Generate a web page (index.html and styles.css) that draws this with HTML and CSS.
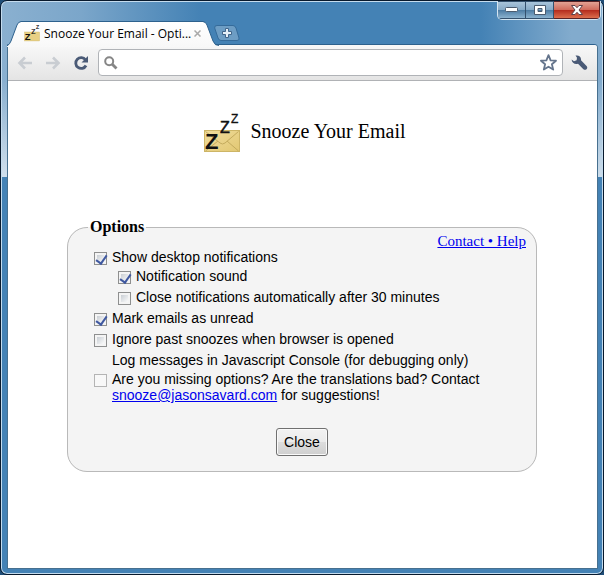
FILE: index.html
```html
<!DOCTYPE html>
<html lang="en">
<head>
  <meta charset="UTF-8">
  <title>Snooze Your Email - Options</title>
  <link rel="stylesheet" href="styles.css">
</head>
<body>

  <div class="window">
    <div class="titlebar">
      <div class="tab">
        <svg class="tab-shape" width="212" height="26" viewBox="0 0 212 26">
          <defs>
            <linearGradient id="tabfill" x1="0" y1="0" x2="0" y2="1">
              <stop offset="0" stop-color="#fff"/>
              <stop offset="1" stop-color="#f8f8f8"/>
            </linearGradient>
          </defs>
          <path d="M0 26V25Q3 23 4 20L10 4Q11 1 14 1H196Q199 1 200 4L206 20Q208 25 212 25V26Z" fill="url(#tabfill)"/>
          <path d="M0 25Q3 23 4 20L10 4Q11 1 14 .5H196Q199 1 200 4L206 20Q208 25 212 24.500" fill="none" stroke="#2d618d"/>
        </svg>
        <svg class="tab-icon snooze" width="17" height="17" viewBox="0 0 38 40">
          <rect x=".5" y="16.500" width="35" height="21" fill="#e8d084" stroke="#cdb566"/>
          <text class="z-big" x="1" y="35">Z</text>
          <text class="z-mid" x="16" y="20">Z</text>
          <text class="z-small" x="27" y="10">Z</text>
        </svg>
        <span class="tab-title">Snooze Your Email - Opti...</span>
        <button class="tab-close" aria-label="Close tab">
          <svg width="7" height="7" viewBox="0 0 7 7"><path d="M.5 .5L6.500 6.500M6.500 .5L.5 6.500" stroke="#a9a9a9" stroke-width="1.500"/></svg>
        </button>
      </div>
      <button class="new-tab" aria-label="New tab">
        <svg width="26" height="16" viewBox="0 0 26 16">
          <path d="M3 .5H19Q21 .5 22 3L25 13Q25.500 15.500 23 15.500H7Q5 15.500 4 13L.7 3Q.2 .5 3 .5Z" fill="#6d9dc4" stroke="#356b9a"/>
          <path d="M11.500 3.500H14.500V6.500H17.500V9.500H14.500V12.500H11.500V9.500H8.500V6.500H11.500Z" fill="#e6f0f8" stroke="#41658a"/>
        </svg>
      </button>
      <div class="controls">
        <button class="control minimize" aria-label="Minimize">
          <svg width="13" height="6" viewBox="0 0 13 6"><rect x=".5" y=".5" width="12" height="4" rx="1" fill="#fff" stroke="#4b5b6e"/></svg>
        </button>
        <button class="control maximize" aria-label="Maximize">
          <svg width="12" height="10" viewBox="0 0 12 10"><path d="M.5 .5H11.500V9.500H.5ZM4 3.500V6.500H8V3.500Z" fill="#fff" fill-rule="evenodd" stroke="#4b5b6e"/></svg>
        </button>
        <button class="control close" aria-label="Close window">
          <svg width="12" height="10" viewBox="0 0 12 10"><path d="M.5 .5H4L6 2.700L8 .5H11.500L8 5L11.500 9.500H8L6 7.300L4 9.500H.5L4 5Z" fill="#fff" stroke="#5c4149"/></svg>
        </button>
      </div>
    </div>

    <div class="browser">
      <div class="toolbar">
        <button class="tool" aria-label="Back" disabled>
          <svg width="16" height="14" viewBox="0 0 16 14"><path d="M15 7H3M8 1.500L2.500 7L8 12.500" fill="none" stroke="#c9cdd2" stroke-width="2.600"/></svg>
        </button>
        <button class="tool" aria-label="Forward" disabled>
          <svg width="16" height="14" viewBox="0 0 16 14"><path d="M1 7H13M8 1.500L13.500 7L8 12.500" fill="none" stroke="#c9cdd2" stroke-width="2.600"/></svg>
        </button>
        <button class="tool" aria-label="Reload">
          <svg width="16" height="16" viewBox="0 0 16 16">
            <path d="M12.500 4.800A5.400 5.400 0 1 0 13 10.500" fill="none" stroke="#4a5a76" stroke-width="2.800"/>
            <path d="M15 1V7.500H8.500Z" fill="#4a5a76"/>
          </svg>
        </button>
        <div class="omnibox">
          <svg width="14" height="14" viewBox="0 0 14 14">
            <circle cx="5.200" cy="5.200" r="4" fill="none" stroke="#868686" stroke-width="2"/>
            <path d="M8 8L12.500 12.500" stroke="#868686" stroke-width="2.800"/>
          </svg>
          <input type="text" class="address" aria-label="Address">
          <svg width="17" height="17" viewBox="0 0 17 17">
            <path d="M8.500 1.200L10.600 6.300L16 6.700L11.900 10.200L13.200 15.600L8.500 12.700L3.800 15.600L5.100 10.200L1 6.700L6.400 6.300Z" fill="#fff" stroke="#64748c" stroke-width="1.800" stroke-linejoin="round"/>
          </svg>
        </div>
        <button class="tool wrench" aria-label="Settings">
          <svg width="17" height="16" viewBox="0 0 17 16">
            <path d="M4.500 .6C7.500 -.2 10.500 1.600 10 5.300L15.800 11.200Q16.800 13 15.500 14.300Q14 15.400 12.400 14.200L7 8.800C4 9.800 .8 8 .6 4.500L3 6.200L5.600 5.300L6 2.700Z" fill="#4a5a76"/>
          </svg>
        </button>
      </div>

      <div class="page">
        <div class="header">
          <svg class="snooze" width="38" height="40" viewBox="0 0 38 40">
            <defs>
              <linearGradient id="paper" x1="0" y1="0" x2="1" y2="1">
                <stop offset="0" stop-color="#f0dc9c"/>
                <stop offset="1" stop-color="#e2c873"/>
              </linearGradient>
            </defs>
            <rect x=".5" y="17.500" width="35" height="21" fill="url(#paper)" stroke="#cdb566"/>
            <path d="M1.500 38L14 28M34.500 38L23 28M1.500 18.500L16 30Q18.500 32 21 30L34.500 18.500" fill="none" stroke="#c4ab5d"/>
            <text class="z-big" x="1" y="36">Z</text>
            <text class="z-mid" x="16" y="20">Z</text>
            <text class="z-small" x="27" y="10">Z</text>
          </svg>
          <span>Snooze Your Email</span>
        </div>

        <fieldset class="options">
          <legend>Options</legend>
          <a href="#" class="links">Contact • Help</a>

          <div class="row">
            <input type="checkbox" id="notify" checked>
            <label for="notify">Show desktop notifications</label>
          </div>
          <div class="row tight nested">
            <input type="checkbox" id="sound" checked>
            <label for="sound">Notification sound</label>
          </div>
          <div class="row nested">
            <input type="checkbox" id="autoclose">
            <label for="autoclose">Close notifications automatically after 30 minutes</label>
          </div>
          <div class="row">
            <input type="checkbox" id="unread" checked>
            <label for="unread">Mark emails as unread</label>
          </div>
          <div class="row">
            <input type="checkbox" id="ignore">
            <label for="ignore">Ignore past snoozes when browser is opened</label>
          </div>
          <div class="row unboxed">
            <label for="log">Log messages in Javascript Console (for debugging only)</label>
          </div>
          <div class="row tight">
            <input type="checkbox" id="log" disabled>
            <span>Are you missing options? Are the translations bad? Contact <a href="mailto:snooze@jasonsavard.com">snooze@jasonsavard.com</a> for suggestions!</span>
          </div>

          <div class="actions">
            <button class="close-button">Close</button>
          </div>
        </fieldset>
      </div>
    </div>
  </div>

</body>
</html>
```
FILE: styles.css
```css
* { box-sizing: border-box; }
body { margin: 0; background: #1f4e78; font-family: "Liberation Serif", serif; }
button { padding: 0; border: none; background: none; }
svg { display: block; flex: none; }
a { color: #0000ee; }

/* window frame */
.window {
  display: flex;
  flex-direction: column;
  min-height: 100vh;
  padding: 0 5px 5px 6px;
  border: 1px solid #08192c;
  border-radius: 7px;
  box-shadow: inset 0 0 0 1px #c5dcee;
  background:
    linear-gradient(to bottom, transparent 80px, rgba(255, 255, 255, 0.6) 176px, transparent 176px),
    linear-gradient(to right, #8ab0d0 0, #7ba6ca 80px, #4482b5 200px, #4482b5 480px, #82abcd 570px) no-repeat 0 0 / 100% 176px,
    #4482b5;
}

.titlebar { display: flex; height: 43px; align-items: flex-end; }
.tab { position: relative; display: flex; align-items: center; flex: none; width: 212px; height: 25px; padding-left: 17px; margin-bottom: -2px; z-index: 1; }
.tab-shape { position: absolute; left: 0; top: 0; }
.tab-icon, .tab-title, .tab-close { position: relative; }
.tab-title { margin-left: 3px; width: 150px; font: 12px/16px "Open Sans", sans-serif; white-space: nowrap; }
.new-tab { margin: 0 0 3px -5px; }

/* snooze icon */
.snooze { overflow: visible; font-family: "Liberation Sans", Arial, sans-serif; fill: #111; }
.z-big { font-size: 22px; font-weight: bold; }
.z-mid { font-size: 16px; stroke: #111; stroke-width: 0.5; }
.z-small { font-size: 12px; stroke: #111; stroke-width: 0.3; }

.controls { display: flex; align-self: flex-start; margin-left: auto; margin-right: -3px; border: 1px solid #d5e5f1; border-top: none; border-radius: 0 0 5px 5px; overflow: hidden; }
.control { display: flex; align-items: center; justify-content: center; width: 28px; height: 18px; border: 1px solid #34506d; border-left: none; background: linear-gradient(#a9c4da 0, #86a9c6 50%, #4c7ba3 51%, #8bb2cf 100%); }
.close { width: 46px; border-color: #5a2225; background: linear-gradient(#e2a294 0, #d0695a 50%, #b42b1d 51%, #dc6e4d 100%); }

.browser { display: flex; flex-direction: column; flex: 1; border: 1px solid #47708f; border-top-color: #2d618d; border-radius: 0 4px 0 0; background: #fff; }

/* toolbar */
.toolbar { display: flex; align-items: center; gap: 12px; height: 36px; padding: 0 9px; border-bottom: 1px solid #b0b2b5; border-radius: 0 3px 0 0; background: linear-gradient(#f8f8f8, #e4e4e4); }
.omnibox { display: flex; align-items: center; flex: 1; height: 27px; margin-left: -3px; padding: 0 5px; border: 1px solid #b0b3b7; border-radius: 4px; background: #fff; }
.address { flex: 1; min-width: 0; border: none; outline: none; background: transparent; font: 13px "Noto Sans", sans-serif; }
.wrench { margin-left: -4px; }

/* options page */
.header { display: flex; align-items: center; justify-content: center; gap: 9px; padding: 32px 0 0 4px; font-size: 20px; line-height: 24px; }
.header span { margin-bottom: 4px; }
.options { position: relative; margin: 65px 60px 0 59px; padding: 8px 26px 15px; border: 1px solid #b9b9b9; border-radius: 20px; background: #f4f4f4; font: 14px/16px "Liberation Sans", Arial, sans-serif; }
.options legend { margin-left: -6px; padding: 0 2px; font: bold 16px/18px "Liberation Serif", serif; }
.links { position: absolute; right: 10px; top: -4px; font: 15px/18px "Liberation Serif", serif; }

.row { display: flex; align-items: flex-start; gap: 5px; margin-top: 5px; }
.tight { margin-top: 3px; }
.nested { padding-left: 24px; }
.unboxed { padding-left: 18px; }

.row input { position: relative; appearance: none; flex: none; width: 13px; height: 13px; margin: 3px 0 0; border: 1px solid #8e8f8f; background: linear-gradient(135deg, #c9ced4, #fafafa) content-box #f4f4f4; padding: 2px; }
.row input:checked::after { content: ""; position: absolute; left: 3px; top: 0; width: 5px; height: 9px; border: solid #3f58a0; border-width: 0 2px 2px 0; transform: rotate(35deg); }
.row input:disabled { border-color: #b4b4b4; background: #f8f8f8; }

.actions { margin-top: 25px; text-align: center; }
.close-button { height: 28px; padding: 0 7px; border: 1px solid #707070; border-radius: 3px; box-shadow: inset 0 0 0 1px #fafafa; background: linear-gradient(#f2f2f2 0, #ebebeb 50%, #dddddd 51%, #cfcfcf 100%); font: 14px "Liberation Sans", Arial, sans-serif; }
```
